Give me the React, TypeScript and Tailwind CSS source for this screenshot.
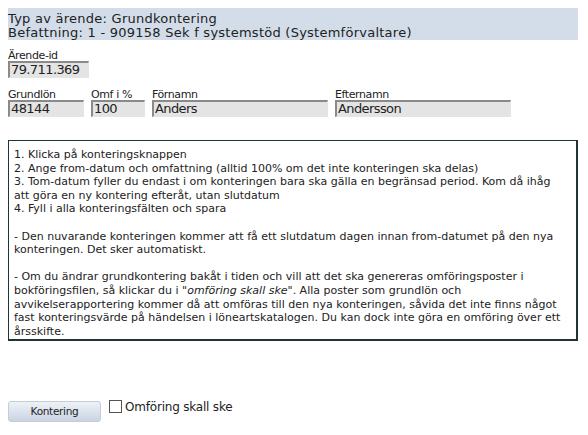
import React from "react"

const body = "font-['DejaVu_Sans',Verdana,sans-serif]"

function Field({ label, value, width }: { label: string; value: string; width: string }) {
  return (
    <div className="flex flex-col">
      <span className={`text-[11px] leading-[11px] h-[11px] text-[#222] ${body} tracking-[-0.4px]`}>{label}</span>
      <div
        className={`${width} h-[17px] bg-[#e4e4e4] border-t-2 border-l-2 border-b border-r border-t-[#8a8a8a] border-l-[#8a8a8a] border-b-[#e4e4e4] border-r-[#e4e4e4] pl-[1px] text-[13px] leading-[14px] text-[#222] ${body} tracking-[-0.6px] whitespace-nowrap overflow-hidden`}
      >
        {value}
      </div>
    </div>
  )
}

export default function App() {
  return (
    <div className="w-[588px] h-[435px] bg-white pt-2 px-2 text-[#222]">
      <div className={`w-[570px] h-[32px] bg-[#d3dde9] ${body} text-[13px] leading-[14px] pt-[4px] tracking-[0.25px] whitespace-nowrap`}>
        <div>Typ av ärende:&nbsp;Grundkontering</div>
        <div>Befattning: 1 - 909158 Sek f systemstöd (Systemförvaltare)</div>
      </div>

      <div className="mt-[10px]">
        <Field label="Ärende-id" value="79.711.369" width="w-[81px]" />
      </div>

      <div className="mt-[11px] flex gap-[7px]">
        <Field label="Grundlön" value="48144" width="w-[76px]" />
        <Field label="Omf i %" value="100" width="w-[54px]" />
        <Field label="Förnamn" value="Anders" width="w-[176px]" />
        <Field label="Efternamn" value="Andersson" width="w-[176px]" />
      </div>

      <div
        className={`mt-[23px] w-[570px] h-[201px] border border-[#1f3535] border-r-2 border-b-2 pl-[5px] pt-[7px] text-[11px] leading-[13.6px] text-[#222] ${body} whitespace-nowrap`}
      >
        1. Klicka på konteringsknappen<br />
        2. Ange from-datum och omfattning (alltid 100% om det inte konteringen ska delas)<br />
        3. Tom-datum fyller du endast i om konteringen bara ska gälla en begränsad period. Kom då ihåg<br />
        att göra en ny kontering efteråt, utan slutdatum<br />
        4. Fyll i alla konteringsfälten och spara<br />
        <br />
        - Den nuvarande konteringen kommer att få ett slutdatum dagen innan from-datumet på den nya<br />
        konteringen. Det sker automatiskt.<br />
        <br />
        - Om du ändrar grundkontering bakåt i tiden och vill att det ska genereras omföringsposter i<br />
        bokföringsfilen, så klickar du i <i>"omföring skall ske"</i>. Alla poster som grundlön och<br />
        avvikelserapportering kommer då att omföras till den nya konteringen, såvida det inte finns något<br />
        fast konteringsvärde på händelsen i löneartskatalogen. Du kan dock inte göra en omföring över ett<br />
        årsskifte.
      </div>

      <div className="mt-[59px] flex items-start">
        <button
          className={`w-[93px] h-[21px] mt-[1px] rounded-[3px] border border-[#c5ccd6] bg-gradient-to-b from-[#eef2f7] to-[#c9d5e4] text-[10.5px] text-[#222] ${body} tracking-[-0.3px]`}
        >
          Kontering
        </button>
        <label className={`ml-[8px] flex items-start text-[12px] leading-[14px] ${body} tracking-[-0.2px]`}>
          <span className="w-[13px] h-[13px] border border-[#555] bg-white mr-[3px]" />
          Omföring skall ske
        </label>
      </div>
    </div>
  )
}
